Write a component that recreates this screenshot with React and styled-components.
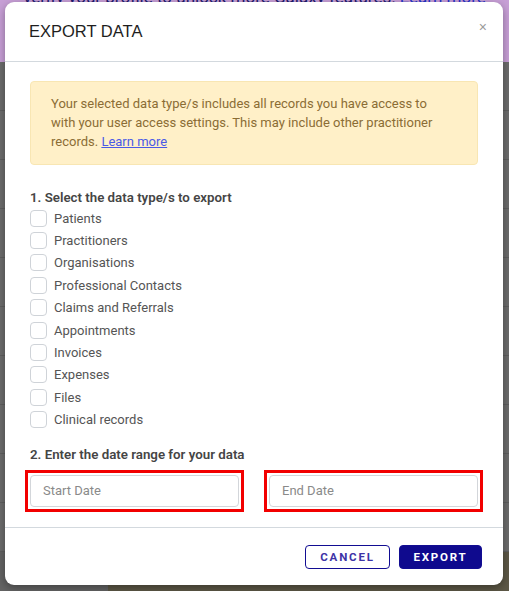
import styled, { createGlobalStyle } from "styled-components";

const Global = createGlobalStyle`
  html, body {
    margin: 0;
    padding: 0;
    background: #6b6b6b;
    font-family: Roboto, "Liberation Sans", Arial, sans-serif;
  }
`;

const Page = styled.div`
  position: relative;
  width: 509px;
  height: 591px;
  overflow: hidden;
  background: #6c6c6c;
`;

const Banner = styled.div`
  height: 62px;
  background: #c79fd6;
  color: #1d1a6e;
  font-size: 17px;
  line-height: 20px;
  text-align: center;
  overflow: hidden;

  & span {
    display: block;
    margin-top: -13px;
  }
  & a {
    color: #2433c9;
  }
`;

const Backdrop = styled.div`
  height: 529px;
  display: flex;
  flex-direction: column;

  & .row {
    height: 48px;
    border-bottom: 1px solid #5e5e5e;
  }
  & .foot {
    flex: 1;
    background: linear-gradient(90deg, #646464 0 108px, #5d5846 108px);
  }
`;

const Modal = styled.div`
  position: absolute;
  left: 5px;
  top: 2px;
  width: 498px;
  height: 583px;
  background: #fff;
  border-radius: 9px;
  box-shadow: 0 3px 8px rgba(0, 0, 0, 0.35);
  display: flex;
  flex-direction: column;
  overflow: hidden;
`;

const Header = styled.div`
  height: 59px;
  flex: none;
  display: flex;
  align-items: center;
  justify-content: space-between;
  padding: 0 16px 0 24px;
  border-bottom: 1px solid #d3d9de;
`;

const Title = styled.h2`
  margin: 0;
  font-family: "Liberation Sans", Arial, sans-serif;
  font-weight: 400;
  font-size: 16.5px;
  color: #1e1e1e;
`;

const Close = styled.span`
  color: #9a9a9a;
  font-size: 14px;
  font-family: "Liberation Sans", Arial, sans-serif;
  margin-top: -10px;
`;

const Body = styled.div`
  flex: 1;
  padding: 19px 25px 18px 25px;
  display: flex;
  flex-direction: column;
`;

const Alert = styled.div`
  background: #fff0c8;
  border: 1px solid #f8e6b3;
  border-radius: 4px;
  padding: 12px 26px 13px 20px;
  color: #8b6d35;
  font-size: 13px;
  line-height: 19px;

  & a {
    color: #4a5ae6;
    text-decoration: underline;
  }
`;

const SectionLabel = styled.div`
  font-size: 13.3px;
  font-weight: 600;
  color: #454545;
  line-height: 18px;
  margin-top: ${(p) => p.$top}px;
`;

const List = styled.div`
  display: flex;
  flex-direction: column;
`;

const CheckRow = styled.label`
  display: flex;
  align-items: center;
  gap: 7px;
  height: 22.4px;
  font-size: 13px;
  color: #555;
`;

const Box = styled.span`
  width: 15px;
  height: 15px;
  border: 1px solid #cfd3d8;
  border-radius: 4px;
  background: #fff;
  flex: none;
`;

const DateGrid = styled.div`
  display: grid;
  grid-template-columns: 1fr 1fr;
  gap: 30px;
  margin-top: 11px;
`;

const Marked = styled.div`
  outline: 3px solid #f20000;
  outline-offset: 2px;
  display: flex;
`;

const DateInput = styled.input`
  width: 100%;
  min-width: 0;
  height: 32px;
  box-sizing: border-box;
  border: 1px solid #d3d6da;
  border-radius: 4px;
  padding: 0 12px;
  font-family: inherit;
  font-size: 13px;
  outline: none;

  &::placeholder {
    color: #8a8a8a;
  }
`;

const Footer = styled.div`
  flex: none;
  border-top: 1px solid #d3d9de;
  display: flex;
  justify-content: flex-end;
  gap: 9px;
  padding: 17px 21px 16px;
`;

const Button = styled.button`
  height: 24px;
  box-sizing: border-box;
  padding: 0 12px;
  border-radius: 4px;
  font-family: inherit;
  font-size: 11.5px;
  font-weight: 700;
  letter-spacing: 1.8px;
  border: 1px solid #120d92;
  background: ${(p) => (p.$primary ? "#0f0a8e" : "#fff")};
  color: ${(p) => (p.$primary ? "#fff" : "#3d33a6")};
  min-width: ${(p) => (p.$primary ? 83 : 85)}px;
`;

const types = [
  "Patients",
  "Practitioners",
  "Organisations",
  "Professional Contacts",
  "Claims and Referrals",
  "Appointments",
  "Invoices",
  "Expenses",
  "Files",
  "Clinical records",
];

export default function App() {
  return (
    <>
      <Global />
      <Page>
        <Banner>
          <span>
            verify your profile to unlock more Galaxy features! <a>Learn more</a>
          </span>
        </Banner>
        <Backdrop>
          <div className="row" />
          <div className="row" />
          <div className="row" />
          <div className="row" />
          <div className="row" />
          <div className="row" />
          <div className="row" />
          <div className="row" />
          <div className="row" />
          <div className="row" />
          <div className="foot" />
        </Backdrop>

        <Modal>
          <Header>
            <Title>EXPORT DATA</Title>
            <Close>×</Close>
          </Header>
          <Body>
            <Alert>
              Your selected data type/s includes all records you have access to
              with your user access settings. This may include other practitioner
              records. <a href="#">Learn more</a>
            </Alert>
            <SectionLabel $top={24}>1. Select the data type/s to export</SectionLabel>
            <List>
              {types.map((t) => (
                <CheckRow key={t}>
                  <Box />
                  {t}
                </CheckRow>
              ))}
            </List>
            <SectionLabel $top={15}>2. Enter the date range for your data</SectionLabel>
            <DateGrid>
              <Marked>
                <DateInput placeholder="Start Date" />
              </Marked>
              <Marked>
                <DateInput placeholder="End Date" />
              </Marked>
            </DateGrid>
          </Body>
          <Footer>
            <Button>CANCEL</Button>
            <Button $primary>EXPORT</Button>
          </Footer>
        </Modal>
      </Page>
    </>
  );
}
